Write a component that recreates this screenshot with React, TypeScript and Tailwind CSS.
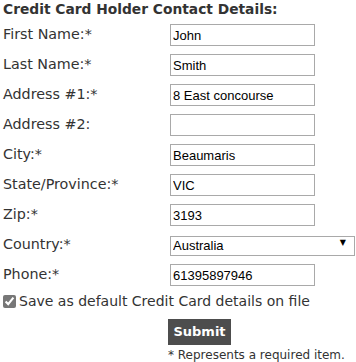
const fields = [
  { label: "First Name:*", value: "John" },
  { label: "Last Name:*", value: "Smith" },
  { label: "Address #1:*", value: "8 East concourse" },
  { label: "Address #2:", value: "" },
  { label: "City:*", value: "Beaumaris" },
  { label: "State/Province:*", value: "VIC" },
  { label: "Zip:*", value: "3193" },
]

function Row({ label, children }: { label: string; children: React.ReactNode }) {
  return (
    <div className="flex h-[30px] items-center">
      <label className="w-[167px] shrink-0 text-[14.3px] text-[#333]">{label}</label>
      {children}
    </div>
  )
}

function TextInput({ value }: { value: string }) {
  return (
    <input
      defaultValue={value}
      className="h-[22px] w-[145px] border border-[#a9a9a9] bg-white px-[2px] font-['Liberation_Sans',Arial,sans-serif] text-[13px] text-black outline-none"
    />
  )
}

export default function App() {
  return (
    <div className="w-[356px] bg-white pl-[3px] font-['DejaVu_Sans',Verdana,sans-serif] text-[#333]">
      <h2 className="h-[20px] text-[13.8px] leading-[18px] font-bold text-[#333]">
        Credit Card Holder Contact Details:
      </h2>
      {fields.map((f) => (
        <Row key={f.label} label={f.label}>
          <TextInput value={f.value} />
        </Row>
      ))}
      <Row label="Country:*">
        <div className="relative">
          <select
            defaultValue="Australia"
            className="h-[20px] w-[185px] appearance-none border border-[#a9a9a9] bg-white pl-[2px] font-['Liberation_Sans',Arial,sans-serif] text-[13px] leading-[18px] text-black outline-none"
          >
            <option>Australia</option>
          </select>
          <span className="pointer-events-none absolute top-[4px] right-[9px] text-[8px] leading-[12px] text-black">▼</span>
        </div>
      </Row>
      <Row label="Phone:*">
        <TextInput value="61395897946" />
      </Row>
      <div className="flex h-[22px] items-center gap-[3px]">
        <input type="checkbox" defaultChecked className="m-0 h-[13px] w-[13px] accent-[#777]" />
        <span className="text-[14px] text-[#333]">Save as default Credit Card details on file</span>
      </div>
      <div className="pl-[165px]">
        <button className="mt-[7px] h-[26px] w-[63px] bg-[#4d4d4d] text-[13px] font-bold text-white">Submit</button>
        <p className="mt-[3px] text-[12px] leading-[14px] text-[#333]">* Represents a required item.</p>
      </div>
    </div>
  )
}
